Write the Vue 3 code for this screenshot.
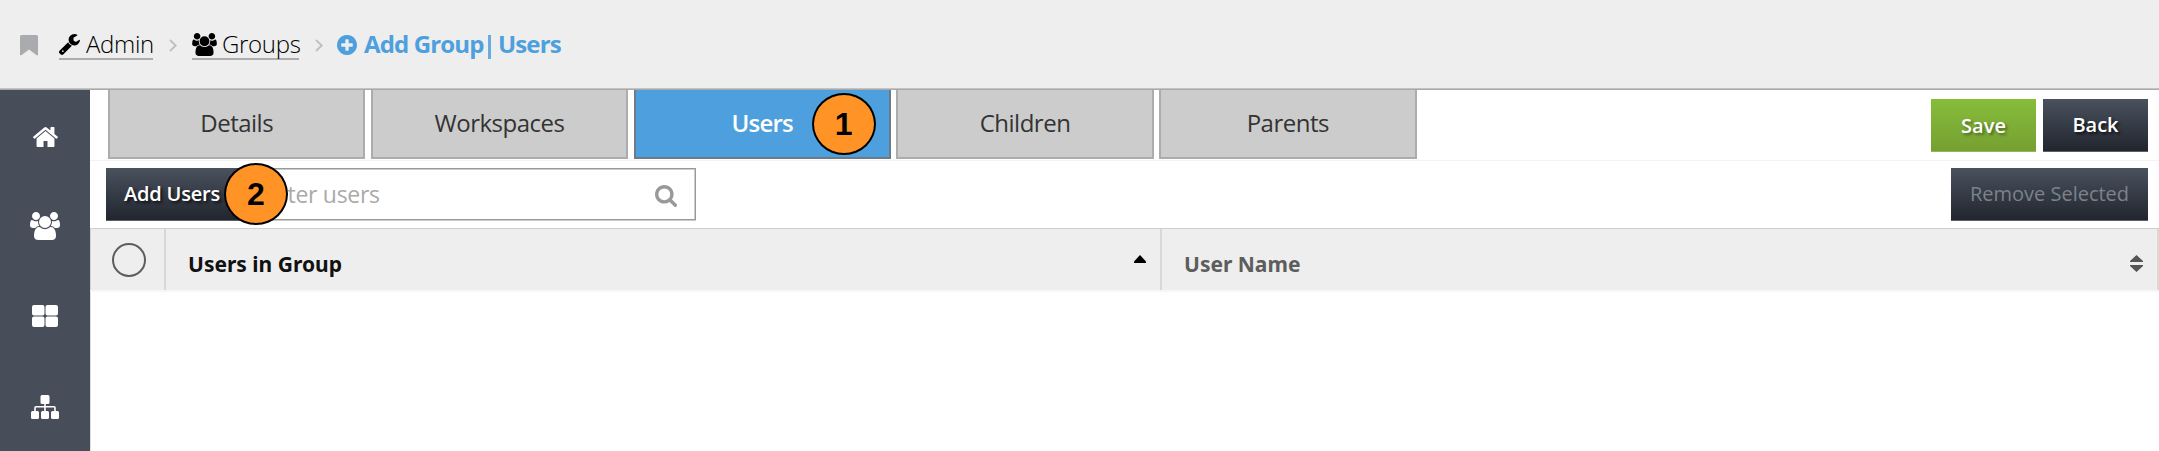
<script setup>
const icons = {
  home: { box: '89 253 1614 1283', d: 'M1472 992v480q0 26-19 45t-45 19h-384v-384h-256v384h-384q-26 0-45-19t-19-45v-480q0-1 .5-3t.5-3l575-474 575 474q1 2 1 6zm223-69l-62 74q-8 9-21 11h-3q-13 0-21-7l-692-577-692 577q-12 8-24 7-13-2-21-11l-62-74q-8-10-7-23.5t11-21.5l719-599q32-26 76-26t76 26l244 204v-195q0-14 9-23t23-9h192q14 0 23 9t9 23v408l219 182q10 8 11 21.5t-7 23.5z' },
  users: { box: '64 0 1920 1792', d: 'M657 896q-162 5-265 128h-134q-82 0-138-40.5t-56-118.5q0-353 124-353 6 0 43.5 21t97.5 42.5 119 21.5q67 0 133-23-5 37-5 66 0 139 81 256zm1071 637q0 120-73 189.5t-194 69.5h-874q-121 0-194-69.5t-73-189.5q0-53 3.5-103.5t14-109 26.5-108.5 43-97.5 62-81 85.5-53.5 111.5-20q10 0 43 21.5t73 48 107 48 135 21.5 135-21.5 107-48 73-48 43-21.5q61 0 111.5 20t85.5 53.5 62 81 43 97.5 26.5 108.5 14 109 3.5 103.5zm-1024-1277q0 106-75 181t-181 75-181-75-75-181 75-181 181-75 181 75 75 181zm704 384q0 159-112.5 271.5t-271.5 112.5-271.5-112.5-112.5-271.5 112.5-271.5 271.5-112.5 271.5 112.5 112.5 271.5zm576 225q0 78-56 118.5t-138 40.5h-134q-103-123-265-128 81-117 81-256 0-29-5-66 66 23 133 23 59 0 119-21.5t97.5-42.5 43.5-21q124 0 124 353zm-128-609q0 106-75 181t-181 75-181-75-75-181 75-181 181-75 181 75 75 181z' },
  grid: { box: '0 0 26 22', d: 'M2 0h8.5a2 2 0 0 1 2 2v6.500a2 2 0 0 1-2 2H2a2 2 0 0 1-2-2V2a2 2 0 0 1 2-2zM15.500 0H24a2 2 0 0 1 2 2v6.500a2 2 0 0 1-2 2h-8.500a2 2 0 0 1-2-2V2a2 2 0 0 1 2-2zM2 11.500h8.500a2 2 0 0 1 2 2V20a2 2 0 0 1-2 2H2a2 2 0 0 1-2-2v-6.500a2 2 0 0 1 2-2zM15.500 11.500H24a2 2 0 0 1 2 2V20a2 2 0 0 1-2 2h-8.500a2 2 0 0 1-2-2v-6.500a2 2 0 0 1 2-2z' },
  sitemap: { box: '0 0 28 24', d: 'M11 0h6a1.500 1.500 0 0 1 1.500 1.500v6A1.500 1.500 0 0 1 17 9h-2.200v2H23a1.800 1.800 0 0 1 1.800 1.800V16h1.700a1.500 1.500 0 0 1 1.500 1.500v5a1.500 1.500 0 0 1-1.500 1.500h-5a1.500 1.500 0 0 1-1.500-1.500v-5a1.500 1.500 0 0 1 1.500-1.500h1.700v-3.400h-8.400V16h1.700a1.500 1.500 0 0 1 1.500 1.500v5a1.500 1.500 0 0 1-1.500 1.500h-5A1.500 1.500 0 0 1 10 22.500v-5a1.500 1.500 0 0 1 1.500-1.500h1.700v-3.400H4.800V16h1.700A1.500 1.500 0 0 1 8 17.500v5A1.500 1.500 0 0 1 6.500 24h-5A1.500 1.500 0 0 1 0 22.500v-5A1.500 1.500 0 0 1 1.500 16h1.700v-3.200A1.800 1.800 0 0 1 5 11h8.200V9H11a1.500 1.500 0 0 1-1.500-1.500v-6A1.500 1.500 0 0 1 11 0z' },
  wrench: { box: '85 128 1641 1643', d: 'M448 1472q0-26-19-45t-45-19-45 19-19 45 19 45 45 19 45-19 19-45zm644-420l-682 682q-37 37-90 37-52 0-91-37l-106-108q-38-36-38-90 0-53 38-91l681-681q39 98 114.5 173.5t173.5 114.500zm634-435q0 39-23 106-47 134-164.500 217.500t-258.500 83.500q-185 0-316.500-131.500t-131.500-316.500 131.500-316.500 316.500-131.500q58 0 121.500 16.500t107.500 46.500q16 11 16 28t-16 28l-293 169v224l193 107q5-3 79-48.500t135.500-81 70.500-35.500q15 0 23.500 10t8.500 25z' },
  plus: { box: '128 128 1536 1536', d: 'M1344 960v-128q0-26-19-45t-45-19h-256v-256q0-26-19-45t-45-19h-128q-26 0-45 19t-19 45v256h-256q-26 0-45 19t-19 45v128q0 26 19 45t45 19h256v256q0 26 19 45t45 19h128q26 0 45-19t19-45v-256h256q26 0 45-19t19-45zm320-64q0 209-103 385.500t-279.500 279.500-385.500 103-385.500-103-279.500-279.500-103-385.500 103-385.500 279.500-279.500 385.500-103 385.500 103 279.500 279.500 103 385.500z' },
  search: { box: '64 128 1664 1664', d: 'M1216 832q0-185-131.500-316.500t-316.500-131.500-316.500 131.500-131.500 316.500 131.500 316.500 316.500 131.500 316.500-131.500 131.500-316.500zm512 832q0 52-38 90t-90 38q-54 0-90-38l-343-342q-179 124-399 124-143 0-273.500-55.500t-225-150-150-225-55.500-273.500 55.500-273.500 150-225 225-150 273.500-55.500 273.500 55.500 225 150 150 225 55.500 273.500q0 220-124 399l343 343q37 37 37 90z' },
}
const nav = ['home', 'users', 'grid', 'sitemap']
const tabs = ['Details', 'Workspaces', 'Users', 'Children', 'Parents']
</script>

<template>
  <div class="page">
    <header class="topbar">
      <svg class="bookmark" viewBox="0 0 18 21"><path d="M1.500 0h15A1.500 1.500 0 0 1 18 1.500V20l-1 .5-8-6-8 6L0 20V1.500A1.500 1.500 0 0 1 1.500 0z" /></svg>
      <a class="crumb admin"><svg class="i-wrench" :viewBox="icons.wrench.box"><path :d="icons.wrench.d" /></svg><span>Admin</span></a>
      <svg class="chev" viewBox="0 0 8 13"><path d="M1 1l5.700 5.500L1 12" /></svg>
      <a class="crumb groups"><svg class="i-groups" :viewBox="icons.users.box"><path :d="icons.users.d" /></svg><span>Groups</span></a>
      <svg class="chev" viewBox="0 0 8 13"><path d="M1 1l5.700 5.500L1 12" /></svg>
      <div class="current">
        <svg class="i-plus" :viewBox="icons.plus.box"><path :d="icons.plus.d" /></svg>
        <span class="add">Add Group</span><i class="bar"></i><span class="usr">Users</span>
      </div>
    </header>
    <div class="body">
      <nav class="side">
        <a v-for="n in nav" :key="n" :class="n"><svg :viewBox="icons[n].box" preserveAspectRatio="none"><path :d="icons[n].d" /></svg></a>
      </nav>
      <main class="main">
        <div class="tabrow">
          <div class="tabs">
            <div v-for="t in tabs" :key="t" class="tab" :class="{ active: t === 'Users' }">
              <span>{{ t }}</span><b v-if="t === 'Users'" class="pin one">1</b>
            </div>
          </div>
          <div class="actions">
            <button class="btn save"><span>Save</span></button>
            <button class="btn back"><span>Back</span></button>
          </div>
        </div>
        <div class="toolbar">
          <button class="btn addusers"><span>Add Users</span></button>
          <div class="filter"><span>Filter users</span><svg :viewBox="icons.search.box"><path :d="icons.search.d" /></svg></div>
          <b class="pin two">2</b>
          <button class="btn remove"><span>Remove Selected</span></button>
        </div>
        <div class="thead">
          <div class="check"><i></i></div>
          <div class="col first"><span>Users in Group</span><svg viewBox="0 0 12 8"><path d="M6 0l6 6.500V8H0V6.500z" /></svg></div>
          <div class="col second"><span>User Name</span><svg viewBox="0 0 13 17"><path d="M6.500 0L13 6v1H0V6zM0 10h13v1l-6.500 6L0 11z" /></svg></div>
          <div class="edge"></div>
        </div>
        <div class="rows"></div>
      </main>
    </div>
  </div>
</template>

<style>
body { margin: 0; overflow: hidden; }
</style>
<style scoped>
* { box-sizing: border-box; }
svg { display: block; flex: none; }
span { white-space: nowrap; }
.page { width: 2159px; height: 451px; overflow: hidden; background: #fff; font-family: "Open Sans", "Noto Sans", sans-serif; font-size: 24px; }
.topbar { height: 90px; display: flex; align-items: flex-start; background: #eee; border-bottom: 1px solid #a9a9a9; box-shadow: inset 0 -1px #c3c3c3; padding: 28px 0 0 20px; line-height: 32px; }
.bookmark { width: 18px; height: 21px; margin-top: 7px; fill: #a9abaf; }
.crumb { display: flex; height: 32px; border-bottom: 2px solid #adadad; color: #000; font-weight: 300; letter-spacing: -.3px; }
.admin { width: 94px; margin-left: 21px; }
.i-wrench { width: 21px; height: 21px; margin: 6px 6px 0 0; }
.groups { width: 107px; margin-left: 15px; }
.i-groups { width: 25px; height: 23px; margin: 5px 5px 0 0; }
.chev { width: 8px; height: 13px; margin: 11px 0 0 16px; fill: none; stroke: #bfbfbf; stroke-width: 1.800; }
.current { display: flex; color: #4da0dd; font-weight: 700; margin-left: 14px; letter-spacing: -.85px; }
.i-plus { width: 20px; height: 20px; margin: 7px 7px 0 0; fill: #4da0dd; }
.add { width: 119px; }
.bar { width: 3px; height: 24px; margin: 7px 7px 0 5px; background: #4da0dd; opacity: .85; }
.body { display: flex; height: 361px; }
.side { width: 90px; background: #474e5a; }
.side a { height: 90.500px; display: flex; align-items: center; justify-content: center; }
.side svg { fill: #fff; width: 26px; height: 22px; }
.side .home svg { height: 20px; width: 25px; margin-top: 3px; }
.side .users svg { width: 30px; height: 28px; }
.side .sitemap svg { width: 28px; height: 24px; }
.main { flex: 1; min-width: 0; }
.tabrow { height: 71px; display: flex; justify-content: space-between; padding: 0 11px 0 18px; border-bottom: 1px solid #f3f3f3; }
.tabs { display: flex; gap: 5.400px; }
.tab { position: relative; width: 257.400px; height: 69px; border: 2px solid #acacac; border-top: 0; background: #ccc; color: #333; text-align: center; line-height: 65px; letter-spacing: -.5px; }
.active { background: #4da0dd; border-color: #6d7b87; color: #fff; font-weight: 600; letter-spacing: -.8px; }
.pin { position: absolute; width: 64px; height: 62px; border: 2px solid #000; border-radius: 50%; background: #ff9326; color: #000; font: bold 32px/59px "Liberation Sans", Arial, sans-serif; letter-spacing: 0; text-align: center; z-index: 2; }
.one { left: 176px; top: 3px; }
.two { left: 134px; top: 2px; }
.actions { display: flex; gap: 7px; padding-top: 9px; }
.btn { display: block; height: 53px; border: 0; padding: 0; background: linear-gradient(#4a525e, #21252e); border-bottom: 1px solid #596069; color: #fff; font-family: inherit; font-size: 20px; font-weight: 600; line-height: 50px; text-shadow: 2px 2px 3px rgba(0,0,0,.7); text-align: center; }
.btn span { display: block; }
.save { width: 105px; background: linear-gradient(#86bd3a, #76a032); border-bottom-color: #92b559; line-height: 54px; text-shadow: 2px 2px 3px rgba(0,0,0,.4); }
.back { width: 105px; }
.toolbar { position: relative; height: 67px; display: flex; align-items: flex-start; padding: 7px 11px 0 16px; }
.addusers { width: 144px; text-align: left; padding-left: 18px; letter-spacing: -.2px; }
.filter { width: 446px; height: 52px; border: 1px solid #999; border-left: 0; box-shadow: inset -1px 1px #ccc, 0 1px #ccc; display: flex; justify-content: space-between; padding: 0 18px 0 15px; color: #aaa; font-size: 23px; line-height: 51px; letter-spacing: -.3px; }
.filter svg { width: 22px; height: 22px; margin-top: 16px; fill: #999; }
.remove { width: 197px; margin-left: auto; color: #7c828a; font-weight: 500; text-shadow: none; }
.thead { height: 62px; display: flex; background: #eee; border-top: 1px solid #cfcfcf; border-left: 1px solid #d3d3d3; font-family: "Noto Sans", "Open Sans", sans-serif; font-size: 21px; font-weight: 700; line-height: 70px; }
.check { width: 75px; border-right: 2px solid #d8d8d8; padding: 14px 0 0 21px; }
.check i { display: block; width: 34px; height: 34px; border: 2.500px solid #5d5d5d; border-radius: 50%; }
.col { display: flex; justify-content: space-between; }
.first { width: 996px; border-right: 2px solid #d8d8d8; padding: 0 14px 0 22px; color: #111; }
.first svg { width: 12px; height: 8px; margin-top: 26px; }
.second { flex: 1; padding: 0 14px 0 22px; color: #5d5d5d; }
.second svg { width: 13px; height: 17px; margin-top: 26px; fill: #555; }
.edge { width: 2px; background: #dadad5; }
.rows { height: 161px; border-top: 2px solid #f7f7f7; border-left: 1px solid #ddd; }
</style>
